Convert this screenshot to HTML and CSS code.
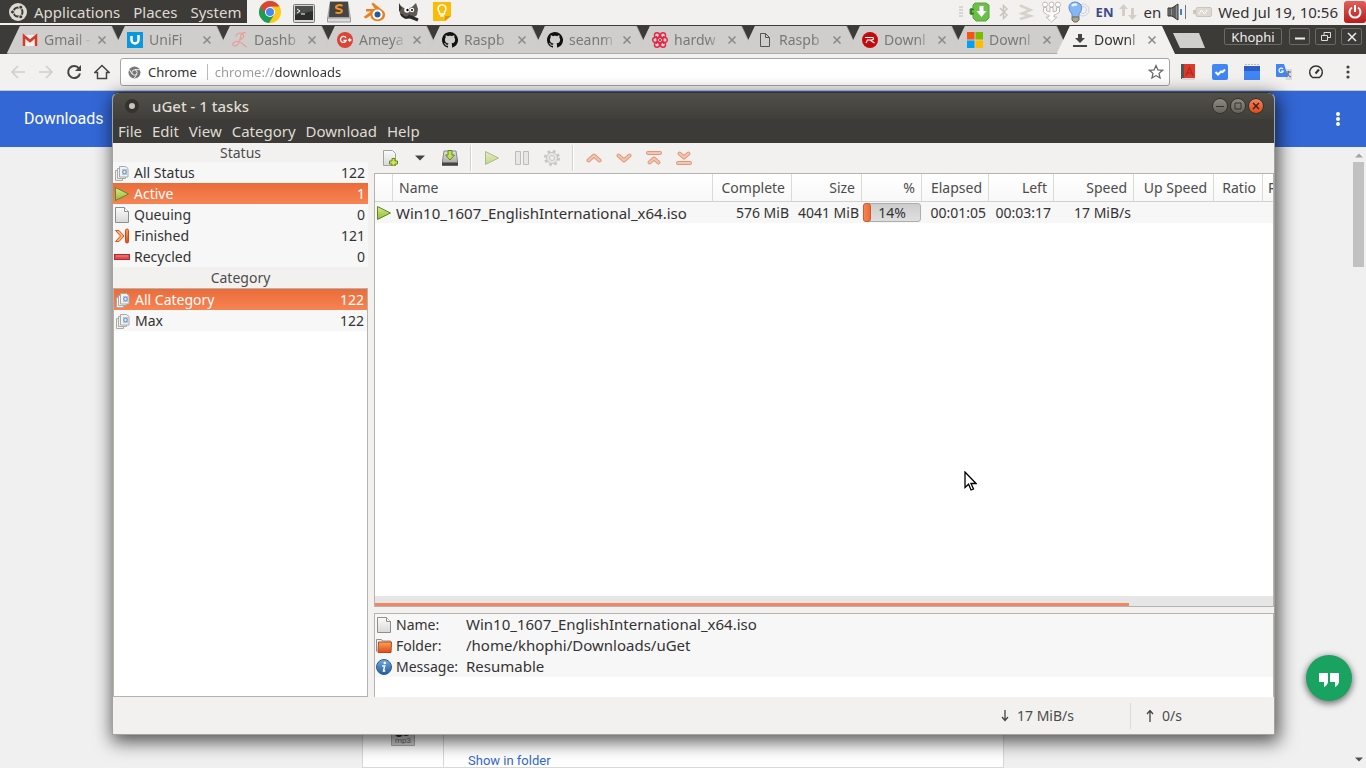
FILE: index.html
```html
<!DOCTYPE html>
<html lang="en">
<head>
    <meta charset="UTF-8">
    <meta name="viewport" content="width=device-width, initial-scale=1.0">
    <title>Downloads</title>
    <link rel="stylesheet" href="styles.css">
</head>
<body>

    <!-- shared icons -->
    <svg class="defs" width="0" height="0" aria-hidden="true">
        <defs>
            <linearGradient id="gGreen" x1="0" y1="0" x2="0" y2="1"><stop offset="0" stop-color="#dbe98c"/><stop offset="1" stop-color="#93b83a"/></linearGradient>
            <linearGradient id="gPaper" x1="0" y1="0" x2="0" y2="1"><stop offset="0" stop-color="#fbfbfb"/><stop offset="1" stop-color="#d8d8d8"/></linearGradient>
            <linearGradient id="gOrange" x1="0" y1="0" x2="0" y2="1"><stop offset="0" stop-color="#f9a35c"/><stop offset="1" stop-color="#df4a16"/></linearGradient>
            <linearGradient id="gBlue" x1="0" y1="0" x2="0" y2="1"><stop offset="0" stop-color="#79a9dc"/><stop offset="1" stop-color="#1f5c9c"/></linearGradient>
            <linearGradient id="gDisk" x1="0" y1="0" x2="0" y2="1"><stop offset="0" stop-color="#e4e4e4"/><stop offset="1" stop-color="#9b9b9b"/></linearGradient>
        </defs>
        <symbol id="play" viewBox="0 0 16 16"><path d="M1.500 1.500v13L14.500 8z" fill="url(#gGreen)" stroke="#5d8a1c"/></symbol>
        <symbol id="page" viewBox="0 0 16 16"><path d="M1.500.5h9l4 4v11h-13z" fill="url(#gPaper)" stroke="#8e8e8e"/><path d="M10.500.500v4h4" fill="#fff" stroke="#8e8e8e"/></symbol>
        <symbol id="pages" viewBox="0 0 16 16">
            <g fill="#f1f1f0" stroke="#a9a9a5"><path d="M1.500 5.500h7v10h-7z"/><path d="M3.500 3.500h8v10h-8z"/><path d="M5.500 1.500h6l2.500 2v8.500h-8.500z"/></g>
            <rect x="8" y="4" width="5" height="6" fill="#b4cbe6"/><circle cx="10.500" cy="7" r="1.800" fill="#dfe9f5" stroke="#6b90bd"/>
        </symbol>
        <symbol id="finished" viewBox="0 0 16 16"><path d="M1.500 2.500l5 5.500-5 5.500h3.500l5-5.500-5-5.500z" fill="#f9b27a" stroke="#d2571f"/><rect x="11.500" y="1" width="3" height="14" rx="1.500" fill="url(#gOrange)" stroke="#cc4b16"/></symbol>
        <symbol id="recycled" viewBox="0 0 16 16"><rect x=".5" y="5.500" width="15" height="5" fill="#e04a4e" stroke="#b32a2e"/><path d="M2 7h12" stroke="#f08a8c"/></symbol>
        <symbol id="folder" viewBox="0 0 16 16"><path d="M.5 13.500v-12h5l1 1.500h8v3" fill="#f4f4f4" stroke="#8d8d8d"/><path d="M2.500 4h13l-.5 10.500H2z" fill="url(#gOrange)" stroke="#b8481a"/></symbol>
        <symbol id="info" viewBox="0 0 16 16"><circle cx="8" cy="8" r="7.500" fill="url(#gBlue)" stroke="#2b5f94"/><circle cx="8.800" cy="4" r="1.300" fill="#fff"/><path d="M6.200 7h2.500l-1.200 5h1.800" fill="none" stroke="#fff" stroke-width="1.500"/></symbol>
        <symbol id="close" viewBox="0 0 8 8"><path d="M.5.5l7 7M7.500.5l-7 7" stroke="currentColor" stroke-width="1.500"/></symbol>
        <symbol id="github" viewBox="0 0 16 16"><path fill="#111" d="M8 0C3.580 0 0 3.580 0 8c0 3.540 2.290 6.530 5.470 7.590.4.070.55-.17.55-.38 0-.19-.01-.82-.01-1.490-2.010.37-2.530-.49-2.690-.94-.09-.23-.48-.94-.82-1.130-.28-.15-.68-.52-.01-.53.63-.01 1.080.58 1.230.82.72 1.210 1.870.87 2.330.66.070-.52.28-.87.51-1.070-1.780-.2-3.640-.89-3.640-3.950 0-.87.31-1.590.82-2.150-.08-.2-.36-1.020.08-2.120 0 0 .67-.21 2.200.82.640-.18 1.320-.27 2-.27s1.360.09 2 .27c1.530-1.040 2.200-.82 2.200-.82.44 1.100.16 1.920.08 2.120.51.560.82 1.270.82 2.150 0 3.070-1.870 3.750-3.650 3.950.29.25.54.73.54 1.480 0 1.070-.01 1.930-.01 2.200 0 .21.15.46.55.38A8 8 0 0 0 8 0z"/></symbol>
        <symbol id="chevron" viewBox="0 0 16 16"><path d="M2.500 10.500L8 5.500l5.500 5" fill="none" stroke="#dd8062" stroke-width="4" stroke-linecap="round" stroke-linejoin="round"/><path d="M2.500 10.500L8 5.500l5.500 5" fill="none" stroke="#f5bd9c" stroke-width="2" stroke-linecap="round"/></symbol>
        <symbol id="chevronBar" viewBox="0 0 16 16"><path d="M2 3h12M3.500 12.500L8 8.500l4.500 4" fill="none" stroke="#dd8062" stroke-width="4" stroke-linecap="round" stroke-linejoin="round"/><path d="M2 3h12M3.500 12.500L8 8.500l4.500 4" fill="none" stroke="#f5bd9c" stroke-width="2" stroke-linecap="round"/></symbol>
    </svg>

    <!-- desktop panel -->
    <header class="panel">
        <nav class="panel-menu">
            <svg width="18" height="18" viewBox="0 0 18 18"><circle cx="9" cy="9" r="9" fill="#dfdbd2"/><circle cx="9" cy="9" r="4.500" fill="none" stroke="#3c3b37" stroke-width="2"/><g fill="#3c3b37" stroke="#dfdbd2"><circle cx="3.500" cy="9" r="2"/><circle cx="11.800" cy="4.200" r="2"/><circle cx="11.800" cy="13.800" r="2"/></g></svg>
            <button>Applications</button>
            <button>Places</button>
            <button>System</button>
        </nav>
        <div class="launchers">
            <button aria-label="Chrome"><svg width="22" height="22" viewBox="0 0 22 22"><circle cx="11" cy="11" r="11" fill="#fbc916"/><path d="M1.500 5.500A11 11 0 0 0 10 22l5.300-8.500L11 11z" fill="#1b9c57"/><path d="M1.500 5.500A11 11 0 0 1 20.500 5.500H11L6.700 13.500z" fill="#dc4437"/><circle cx="11" cy="11" r="5" fill="#fff"/><circle cx="11" cy="11" r="4" fill="#4688f1"/></svg></button>
            <button aria-label="Terminal"><svg width="22" height="22" viewBox="0 0 22 22"><rect x=".5" y="3.500" width="21" height="18" rx="1" fill="#d8d8d4" stroke="#777"/><rect x="2" y="5" width="18" height="14" fill="#2b2d2b"/><path d="M2 5h18v5L2 14z" fill="#4b4e4b"/><path d="M4 8l3 2-3 2M8 13h4" fill="none" stroke="#fff"/></svg></button>
            <button aria-label="Sublime Text"><svg width="24" height="22" viewBox="0 0 24 22"><path d="M3 0h18l3 17v4H0v-4z" fill="#a9a9a9"/><path d="M3 1h18l1 15H2z" fill="#454545"/><path d="M.5 17h23v4H.5z" fill="#dcdcdc" stroke="#9a9a9a"/><path d="M15.500 4.800C13 3.500 9 4 9 6.200s6 1.300 6 3.600-4 2.700-6.500 1.500" fill="none" stroke="#f8931f" stroke-width="2"/></svg></button>
            <button aria-label="Blender"><svg width="23" height="20" viewBox="0 0 23 20"><path d="M10 .5l10.500 8.500c3 3 1.500 8-2.500 9.500-5 2-10.500-1-10.500-5L3 16.500.5 15l7.500-5.500H3V7h9L8.500 2z" fill="#e88020"/><circle cx="14.500" cy="12.500" r="5" fill="#fff"/><circle cx="14.500" cy="12.500" r="3" fill="#225a9c"/></svg></button>
            <button aria-label="GIMP"><svg width="22" height="20" viewBox="0 0 22 20"><path d="M1 3l5 3c3 1 6 0 8-1l4-4 2 6-1 6-4 3-8 1-5-5z" fill="#5f5b52"/><circle cx="9" cy="8" r="2.800" fill="#fff"/><circle cx="14" cy="8" r="2.200" fill="#fff"/><circle cx="9.500" cy="8" r="1.200"/><circle cx="14" cy="8" r="1"/><path d="M1 1l3 5-3 4z" fill="#333"/><path d="M10 14l10 4" stroke="#2e2c28" stroke-width="3"/><path d="M3 12c2 4 6 4 8 3" stroke="#272622" stroke-width="2" fill="none"/></svg></button>
            <button aria-label="Keep"><svg width="20" height="20" viewBox="0 0 20 20"><path d="M1 0h18v14l-6 5H1z" fill="#fbbc05"/><path d="M19 14h-6v5z" fill="#e09a00"/><path d="M7.500 12v-2.200a4 4 0 1 1 5 0V12zM8 14h4" fill="none" stroke="#fff" stroke-width="1.500"/></svg></button>
        </div>
        <div class="tray">
            <svg width="4" height="12" viewBox="0 0 4 12"><path d="M0 1h4M0 4h4M0 7h4M0 10h4" stroke="#bbb"/></svg>
            <svg width="21" height="20" viewBox="0 0 21 20"><path d="M6 1h11l3 2v13l-3 3H7l-3-3v-3L1 12V7l3-1V3z" fill="#6cbf4a" stroke="#57a639"/><path d="M5 7.500H2v4h3" fill="none" stroke="#2f7a1b" stroke-width="1.500"/><path d="M10.500 4h4v5h3L12.500 15l-5-6h3z" fill="#fff"/></svg>
            <svg width="15" height="18" viewBox="0 0 15 18"><path d="M4 5l7 7-3.500 3.500v-13L11 6l-7 7" fill="none" stroke="#c9c5be" stroke-width="1.500"/></svg>
            <svg width="18" height="18" viewBox="0 0 18 18"><path d="M3 2.500l10.500 4.500L5 10.500l8.500 2.500L3 16" fill="none" stroke="#d6d2ca" stroke-width="2.500"/></svg>
            <svg width="21" height="22" viewBox="0 0 21 22"><g fill="#fff" stroke="#c0bbb2"><circle cx="4" cy="3.500" r="2.500"/><circle cx="10.500" cy="3.500" r="2.500"/><circle cx="17" cy="3.500" r="2.500"/><path d="M2.500 6.500h3V10l3.500 1V6.500h3V11l3.500-1V6.500h3V11l-4.500 3H13v2h3l-5.500 5L5 16h3v-2H6.500l-4-3z"/></g></svg>
            <svg width="22" height="22" viewBox="0 0 22 22"><circle cx="15" cy="9" r="6" fill="none" stroke="#cbd1da"/><circle cx="15" cy="9" r="3.500" fill="none" stroke="#cbd1da"/><path d="M4 13C-2 6 2 1 7 1s10 5 4 12v3H4z" fill="#86b6f5" stroke="#5e8fd5"/><path d="M4 5q2-2.500 5-1" stroke="#e9f4ff" stroke-width="2.500" fill="none"/><path d="M4 16h7v3l-2 2H6l-2-2z" fill="#aaa58d" stroke="#716d5a"/></svg>
            <span class="tray-lang">EN</span>
            <svg width="18" height="18" viewBox="0 0 18 18"><path d="M0 6l4.500-5L9 6H6v7H3V6zM9 12h3V5h3v7h3l-4.500 5z" fill="#d3cfc5"/></svg>
            <span>en</span>
            <svg width="20" height="18" viewBox="0 0 20 18"><path d="M1 5h4l6-4v16l-6-4H1z" fill="#8e8e8e" stroke="#333"/><path d="M3 5v8M6 4v10M8 3v12" stroke="#333"/><path d="M14 6v6" stroke="#3c86c6" stroke-width="2"/><path d="M18.500 2v14" stroke="#777"/></svg>
            <svg width="19" height="12" viewBox="0 0 19 12"><rect x="3" y="1.500" width="15.500" height="9" rx="1.500" fill="#dedad2" stroke="#cac6bd"/><path d="M0 4h3v4H0z" fill="#cac6bd"/><path d="M6 8l2.500-4 3 4L14 4" stroke="#fff" fill="none"/></svg>
            <time>Wed Jul 19, 10:56</time>
            <button class="power" aria-label="Shut down"><svg width="14" height="14" viewBox="0 0 14 14"><path d="M4 2.500a5.500 5.500 0 1 0 6 0M7 0v7" fill="none" stroke="#fff" stroke-width="2"/></svg></button>
        </div>
    </header>

    <!-- browser -->
    <div class="tabstrip">
        <div class="tabs">
            <div class="tab"><svg width="16" height="16" viewBox="0 0 16 16"><path d="M1 3h14v11H1z" fill="#f4f0ee"/><path d="M2 14V4l6 5 6-5v10" fill="none" stroke="#d8392b" stroke-width="2.500"/></svg><a href="#">Gmail -</a><button aria-label="Close tab"><svg><use href="#close"/></svg></button></div>
            <div class="tab"><svg width="16" height="16" viewBox="0 0 16 16"><path d="M0 0h16v16H0z" fill="#0b97dc"/><path d="M4.500 4v4a3.500 3.500 0 0 0 7 0V3" fill="none" stroke="#fff" stroke-width="2.500"/></svg><a href="#">UniFi</a><button aria-label="Close tab"><svg><use href="#close"/></svg></button></div>
            <div class="tab"><svg width="16" height="16" viewBox="0 0 16 16"><path d="M14 1C9-1 9 4 8 8s-4 7-6.500 5.500S3 9 6.500 9.500 12 14 15 15M4 4.500c0-4 5-4 7-2s-1 5-4 5" fill="none" stroke="#e8a09b" stroke-width="1.200"/></svg><a href="#">Dashb</a><button aria-label="Close tab"><svg><use href="#close"/></svg></button></div>
            <div class="tab"><svg width="16" height="16" viewBox="0 0 16 16"><circle cx="8" cy="8" r="8" fill="#db4437"/><path d="M9 5.800a3 3 0 1 0 .3 2.700H6.500M11 8h3.500M12.700 6.200v3.600" fill="none" stroke="#fff" stroke-width="1.300"/></svg><a href="#">Ameya</a><button aria-label="Close tab"><svg><use href="#close"/></svg></button></div>
            <div class="tab"><svg width="16" height="16"><use href="#github"/></svg><a href="#">Raspb</a><button aria-label="Close tab"><svg><use href="#close"/></svg></button></div>
            <div class="tab"><svg width="16" height="16"><use href="#github"/></svg><a href="#">seanm</a><button aria-label="Close tab"><svg><use href="#close"/></svg></button></div>
            <div class="tab"><svg width="16" height="16" viewBox="0 0 16 16"><g fill="#f6cfd5" stroke="#da2c48" stroke-width="1.500"><circle cx="5" cy="3.300" r="2.500"/><circle cx="11" cy="3.300" r="2.500"/><circle cx="3.200" cy="8" r="2.500"/><circle cx="12.800" cy="8" r="2.500"/><circle cx="5" cy="12.700" r="2.500"/><circle cx="11" cy="12.700" r="2.500"/><circle cx="8" cy="8" r="2.800"/></g><path d="M4 4l8 8M12 4l-8 8" stroke="#da2c48"/></svg><a href="#">hardw</a><button aria-label="Close tab"><svg><use href="#close"/></svg></button></div>
            <div class="tab"><svg width="16" height="16" viewBox="0 0 16 16"><path d="M3.500 1.500h5l4 4v9h-9zM8.500 1.500v4h4" fill="none" stroke="#555"/></svg><a href="#">Raspb</a><button aria-label="Close tab"><svg><use href="#close"/></svg></button></div>
            <div class="tab"><svg width="16" height="16" viewBox="0 0 16 16"><circle cx="8" cy="8" r="8" fill="#c40a0a"/><path d="M3 5.500h8q1.500 2-1.500 2.500H5.500L4 11M8 8l4.500 3" fill="none" stroke="#fff" stroke-width="1.200"/></svg><a href="#">Downl</a><button aria-label="Close tab"><svg><use href="#close"/></svg></button></div>
            <div class="tab"><svg width="16" height="16" viewBox="0 0 16 16"><path d="M0 0h7.500v7.500H0z" fill="#f65314"/><path d="M8.500 0H16v7.500H8.500z" fill="#7cbb00"/><path d="M0 8.500h7.500V16H0z" fill="#00a1f1"/><path d="M8.500 8.500H16V16H8.500z" fill="#ffbb00"/></svg><a href="#">Downl</a><button aria-label="Close tab"><svg><use href="#close"/></svg></button></div>
            <div class="tab active"><svg width="16" height="16" viewBox="0 0 16 16"><path d="M6 2h4v4h3l-5 5-5-5h3zM1 13h14v2H1z" fill="#444"/></svg><a href="#">Downl</a><button aria-label="Close tab"><svg><use href="#close"/></svg></button></div>
        </div>
        <button class="new-tab" aria-label="New tab"></button>
        <div class="browser-controls">
            <button class="profile">Khophi</button>
            <button aria-label="Minimize"><svg width="12" height="12" viewBox="0 0 12 12"><path d="M1 7.500h10" stroke="#eee" stroke-width="2"/></svg></button>
            <button aria-label="Restore"><svg width="12" height="12" viewBox="0 0 12 12"><path d="M4 4V1.500h6.500v5H8M1.500 4.500h6v5h-6z" fill="none" stroke="#ddd"/></svg></button>
            <button aria-label="Close"><svg width="12" height="12" viewBox="0 0 12 12"><path d="M2 2l8 8M10 2l-8 8" stroke="#eee" stroke-width="1.500"/></svg></button>
        </div>
    </div>

    <div class="toolbar">
        <div class="nav-buttons">
            <button aria-label="Back"><svg width="16" height="16" viewBox="0 0 16 16"><path d="M15 8H2M8 2L2 8l6 6" fill="none" stroke="#cfcecc" stroke-width="1.600"/></svg></button>
            <button aria-label="Forward"><svg width="16" height="16" viewBox="0 0 16 16"><path d="M1 8h13M8 2l6 6-6 6" fill="none" stroke="#cfcecc" stroke-width="1.600"/></svg></button>
            <button aria-label="Reload"><svg width="16" height="16" viewBox="0 0 16 16"><path d="M13 4.500A6 6 0 1 0 14 9.500" fill="none" stroke="#444" stroke-width="2"/><path d="M15 1v6H9z" fill="#444"/></svg></button>
            <button aria-label="Home"><svg width="16" height="16" viewBox="0 0 16 16"><path d="M.8 8.500L8 1.500l7.200 7H12.500v6h-9v-6z" fill="none" stroke="#444" stroke-width="1.500"/></svg></button>
        </div>
        <div class="omnibox">
            <svg width="13" height="13" viewBox="0 0 13 13"><circle cx="6.500" cy="6.500" r="6" fill="#777"/><circle cx="6.500" cy="6.500" r="2.600" fill="#777" stroke="#eee"/><path d="M6.500 3.700H12M4 8L1.300 3.500M9 8l-3 4.500" stroke="#eee"/></svg>
            <label for="address">Chrome</label>
            <input id="address" type="text" value="chrome://downloads">
            <button aria-label="Bookmark"><svg width="16" height="16" viewBox="0 0 16 16"><path d="M8 1.500l1.900 4.400 4.700.4-3.600 3.100 1.100 4.600L8 11.600 3.900 14 5 9.400 1.400 6.300l4.700-.4z" fill="none" stroke="#666" stroke-width="1.200"/></svg></button>
        </div>
        <div class="extensions">
            <button aria-label="Dictionary"><svg width="16" height="16" viewBox="0 0 16 16"><path d="M1 0h14v14H1z" fill="#dc3b2c"/><path d="M1 0h3v15H1z" fill="#555"/><path d="M2 14h13v2H2z" fill="#ddd"/><path d="M6 11.500l3.500-8 3.500 8M7.500 9h4" fill="none" stroke="#b0281d" stroke-width="1.200"/></svg></button>
            <button aria-label="Tasks"><svg width="16" height="16" viewBox="0 0 16 16"><rect width="16" height="16" rx="2" fill="#4285f4"/><path d="M3.500 8l2.500 2.500 3-3L10.500 8l2.500-2.500" fill="none" stroke="#fff" stroke-width="2"/></svg></button>
            <button aria-label="Inbox"><svg width="16" height="16" viewBox="0 0 16 16"><path d="M1 .5h14" stroke="#bbb" stroke-dasharray="2 1"/><path d="M0 2h16v14H0z" fill="#4285f4"/><path d="M0 2h16v5H0z" fill="#2c5fc4"/></svg></button>
            <button aria-label="Translate"><svg width="16" height="16" viewBox="0 0 16 16"><path d="M7 5h9v11H10z" fill="#d5d8dc"/><path d="M0 0h8l4 13H1q-1 0-1-1z" fill="#4285f4"/><path d="M7 5a2.200 2.200 0 1 0 .3 2H5" fill="none" stroke="#fff" stroke-width="1.200"/><path d="M10 8h5M12.500 7v1q0 3-2 4M11 9q2 4 4 4" fill="none" stroke="#667"/></svg></button>
            <button aria-label="Speed"><svg width="16" height="16" viewBox="0 0 16 16"><path d="M4.500 13.500a6.300 6.300 0 1 1 7 0z" fill="none" stroke="#333" stroke-width="1.500"/><path d="M7.500 9.500l3.500-4" stroke="#333" stroke-width="2"/></svg></button>
            <button aria-label="Menu"><svg width="16" height="16" viewBox="0 0 16 16"><g fill="#444"><circle cx="8" cy="3" r="1.600"/><circle cx="8" cy="8" r="1.600"/><circle cx="8" cy="13" r="1.600"/></g></svg></button>
        </div>
    </div>

    <header class="page-header">
        <h1>Downloads</h1>
        <button aria-label="More actions"><svg width="16" height="16" viewBox="0 0 16 16"><g fill="#fff"><circle cx="8" cy="3" r="2"/><circle cx="8" cy="8" r="2"/><circle cx="8" cy="13" r="2"/></g></svg></button>
    </header>

    <main class="page">
        <div class="page-content">
            <div class="download-card">
                <div class="file-icon"><svg width="24" height="24" viewBox="0 0 24 24"><path d="M.5 0v23.500h23V0" fill="#d2d2d2" stroke="#aaa"/><g fill="#333"><circle cx="8" cy="11" r="4"/><circle cx="15" cy="10" r="4"/></g></svg><span>mp3</span></div>
                <div class="file-info"><a href="#">Show in folder</a></div>
            </div>
        </div>
        <div class="scrollbar">
            <svg width="8" height="5" viewBox="0 0 8 5"><path d="M0 4.500L4 .5l4 4z" fill="#a3a3a3"/></svg>
            <div class="thumb"></div>
            <svg width="8" height="5" viewBox="0 0 8 5"><path d="M0 .5l4 4 4-4z" fill="#505050"/></svg>
        </div>
    </main>

    <button class="hangouts" aria-label="Hangouts"><svg width="20" height="14" viewBox="0 0 20 14"><path d="M0 0h9v8q0 4-4 6V9H0zM11 0h9v8q0 4-4 6V9h-5z" fill="#fff"/></svg></button>

    <!-- uGet window -->
    <section class="window">
        <div class="titlebar">
            <button class="title-dot" aria-label="Window menu"></button>
            <h2>uGet - 1 tasks</h2>
            <button class="title-button" aria-label="Minimize"><svg width="8" height="8" viewBox="0 0 8 8"><path d="M0 4.500h8" stroke="#33322e"/></svg></button>
            <button class="title-button" aria-label="Maximize"><svg width="8" height="8" viewBox="0 0 8 8"><path d="M1 1h6v6H1z" fill="none" stroke="#33322e"/></svg></button>
            <button class="title-button title-close" aria-label="Close"><svg width="8" height="8" viewBox="0 0 8 8"><path d="M1 1l6 6M7 1L1 7" stroke="#4a1d10" stroke-width="1.500"/></svg></button>
        </div>
        <nav class="menubar">
            <button>File</button>
            <button>Edit</button>
            <button>View</button>
            <button>Category</button>
            <button>Download</button>
            <button>Help</button>
        </nav>

        <div class="panes">
            <aside class="sidebar">
                <h3>Status</h3>
                <ul class="list">
                    <li><svg><use href="#pages"/></svg>All Status<span>122</span></li>
                    <li class="selected"><svg><use href="#play"/></svg>Active<span>1</span></li>
                    <li><svg><use href="#page"/></svg>Queuing<span>0</span></li>
                    <li><svg><use href="#finished"/></svg>Finished<span>121</span></li>
                    <li><svg><use href="#recycled"/></svg>Recycled<span>0</span></li>
                </ul>
                <h3 class="category-title">Category</h3>
                <ul class="list framed">
                    <li class="selected"><svg><use href="#pages"/></svg>All Category<span>122</span></li>
                    <li><svg><use href="#pages"/></svg>Max<span>122</span></li>
                </ul>
            </aside>

            <div class="content">
                <div class="tools">
                    <button aria-label="New download"><svg width="16" height="16" viewBox="0 0 16 16"><path d="M1.500.5h9l3 3v12h-12z" fill="url(#gPaper)" stroke="#a2a2a2"/><path d="M10 8.500h3v2.500h2.500v3H13v2h-3v-2H7.500v-3H10z" fill="#cfe35a" stroke="#5d8a1c"/></svg></button>
                    <button aria-label="More new downloads"><svg width="10" height="6" viewBox="0 0 10 6"><path d="M0 .5h10l-5 5z" fill="#444"/></svg></button>
                    <button aria-label="Save"><svg width="16" height="16" viewBox="0 0 16 16"><path d="M2 1h12l1.500 10v4.500H.5V11z" fill="url(#gDisk)" stroke="#888"/><path d="M0 12.500h16v3H0z" fill="#444"/><path d="M6 .5h4V5h2.500L8 10 3.500 5H6z" fill="#c3dc5c" stroke="#5d8a1c"/></svg></button>
                    <i></i>
                    <button disabled aria-label="Start"><svg width="16" height="16"><use href="#play"/></svg></button>
                    <button disabled aria-label="Pause"><svg width="16" height="16" viewBox="0 0 16 16"><path d="M1.500 1.500h5v13h-5zM9.500 1.500h5v13h-5z" fill="#ddd" stroke="#888"/></svg></button>
                    <button disabled aria-label="Properties"><svg width="16" height="16" viewBox="0 0 16 16"><circle cx="8" cy="8" r="6.500" fill="none" stroke="#999" stroke-width="3" stroke-dasharray="2.600 2.500"/><circle cx="8" cy="8" r="5.500" fill="#ddd" stroke="#999"/><circle cx="8" cy="8" r="2.500" fill="#eee" stroke="#999"/></svg></button>
                    <i></i>
                    <button aria-label="Move up"><svg width="16" height="16"><use href="#chevron"/></svg></button>
                    <button aria-label="Move down"><svg class="flip" width="16" height="16"><use href="#chevron"/></svg></button>
                    <button aria-label="Move to top"><svg width="16" height="16"><use href="#chevronBar"/></svg></button>
                    <button aria-label="Move to bottom"><svg class="flip" width="16" height="16"><use href="#chevronBar"/></svg></button>
                </div>

                <div class="downloads">
                    <table>
                        <colgroup><col class="c-icon"><col><col class="c-complete"><col class="c-size"><col class="c-percent"><col class="c-elapsed"><col class="c-left"><col class="c-speed"><col class="c-speed"><col class="c-ratio"><col class="c-last"></colgroup>
                        <thead>
                            <tr><th></th><th class="name">Name</th><th>Complete</th><th>Size</th><th>%</th><th>Elapsed</th><th>Left</th><th>Speed</th><th>Up Speed</th><th>Ratio</th><th class="cut">R</th></tr>
                        </thead>
                        <tbody>
                            <tr>
                                <td><svg width="16" height="16"><use href="#play"/></svg></td>
                                <td class="name">Win10_1607_EnglishInternational_x64.iso</td>
                                <td>576 MiB</td>
                                <td>4041 MiB</td>
                                <td class="progress-cell"><div class="progress"><div class="fill" style="width: 14%"></div><span>14%</span></div></td>
                                <td>00:01:05</td>
                                <td>00:03:17</td>
                                <td>17 MiB/s</td>
                                <td></td>
                                <td></td>
                                <td></td>
                            </tr>
                        </tbody>
                    </table>
                    <div class="hscroll"><div></div></div>
                </div>

                <div class="details">
                    <dl>
                        <dt><svg><use href="#page"/></svg>Name:</dt><dd>Win10_1607_EnglishInternational_x64.iso</dd>
                        <dt><svg><use href="#folder"/></svg>Folder:</dt><dd>/home/khophi/Downloads/uGet</dd>
                        <dt><svg><use href="#info"/></svg>Message:</dt><dd>Resumable</dd>
                    </dl>
                </div>
            </div>
        </div>

        <footer class="statusbar">
            <div><svg width="8" height="12" viewBox="0 0 8 12"><path d="M4 0v10M1 7l3 3.500L7 7" fill="none" stroke="#444" stroke-width="1.300"/></svg>17 MiB/s</div>
            <div><svg width="8" height="12" viewBox="0 0 8 12"><path d="M4 12V1M1 4l3-3.500L7 4" fill="none" stroke="#444" stroke-width="1.300"/></svg>0/s</div>
        </footer>
    </section>

    <svg class="cursor" width="13" height="20" viewBox="0 0 13 20"><path d="M1 1v15.500l3.600-3.300L7 19l2.500-1-2.500-5.500h5z" fill="#fff" stroke="#000" stroke-width="1.300"/></svg>

</body>
</html>
```
FILE: styles.css
```css
* {
    box-sizing: border-box;
}

body {
    margin: 0;
    height: 100vh;
    display: flex;
    flex-direction: column;
    overflow: hidden;
    position: relative;
    background: #f0f0f0;
    color: #333;
    font-family: "Noto Sans", "Open Sans", sans-serif;
    font-size: 14px;
    line-height: 20px;
}

h1, h2, h3, ul, dl, dd {
    margin: 0;
    padding: 0;
    font-weight: normal;
    font-size: inherit;
}

ul {
    list-style: none;
}

svg {
    display: block;
    flex: none;
}

.defs {
    position: absolute;
}

button {
    display: flex;
    align-items: center;
    justify-content: center;
    padding: 0;
    border: none;
    background: none;
    color: inherit;
    font: inherit;
}

a {
    color: inherit;
    text-decoration: none;
}

/* desktop panel */
.panel {
    height: 26px;
    flex: none;
    display: flex;
    align-items: center;
    padding-bottom: 2px;
    background: #f2f1ef;
    border-bottom: 1px solid #3c3b37;
    font-size: 15px;
}

.panel-menu {
    display: flex;
    align-items: center;
    align-self: stretch;
    gap: 13px;
    padding: 0 6px 0 9px;
    background: #3c3b37;
    color: #dfdbd2;
}

.panel-menu svg {
    margin-right: -6px;
}

.launchers {
    display: flex;
    align-items: center;
    gap: 12px;
    padding-left: 12px;
}

.tray {
    display: flex;
    align-items: center;
    gap: 6px;
    margin-left: auto;
    white-space: nowrap;
}

.tray-lang {
    color: #3b4a8c;
    font-weight: bold;
    font-size: 13px;
}

.power {
    width: 22px;
    height: 22px;
    border-radius: 3px;
    background: linear-gradient(#e2605c, #b81c1c);
}

/* browser tabs */
.tabstrip {
    height: 28px;
    flex: none;
    display: flex;
    padding: 0 4px 0 7px;
    background: #3c3b37;
}

.tabs {
    display: flex;
    flex: 0 1 1168px;
    min-width: 0;
}

.tab {
    position: relative;
    isolation: isolate;
    flex: 1 1 0;
    min-width: 0;
    margin-right: -13px;
    padding: 0 19px 0 15px;
    display: flex;
    align-items: center;
    gap: 6px;
    color: #7a7876;
}

.tab:last-child {
    margin-right: 0;
}

.tab::before,
.tab::after {
    content: "";
    position: absolute;
    inset: 0;
    z-index: -2;
    background: #aeaca9;
    clip-path: polygon(13px 0, calc(100% - 13px) 0, 100% 100%, 0 100%);
}

.tab::after {
    right: 1px;
    bottom: 1px;
    z-index: -1;
    background: #d0cecc;
}

.tab.active {
    color: #333;
    z-index: 1;
}

.tab.active::before,
.tab.active::after {
    background: #f2f1ef;
}

.tab a {
    flex: 1;
    min-width: 0;
    overflow: hidden;
    white-space: nowrap;
    mask-image: linear-gradient(to right, #000 70%, transparent);
}

.tab button svg {
    width: 8px;
    height: 8px;
    color: #8b8987;
}

.new-tab {
    width: 32px;
    height: 15px;
    margin: 7px 0 0 -2px;
    background: #d0cecc;
    clip-path: polygon(0 0, 26px 0, 100% 100%, 7px 100%);
}

.browser-controls {
    display: flex;
    gap: 5px;
    margin-left: auto;
    color: #eee;
    font-size: 13px;
}

.browser-controls button {
    width: 21px;
    height: 17px;
    margin-top: 2px;
    border: 1px solid #6b6964;
    border-radius: 2px;
}

.browser-controls .profile {
    width: 58px;
    margin-right: 2px;
}

/* browser toolbar */
.toolbar {
    height: 37px;
    flex: none;
    display: flex;
    align-items: center;
    padding: 0 10px;
    background: #f2f1ef;
    border-bottom: 1px solid #c8c6c4;
}

.nav-buttons {
    display: flex;
    gap: 12px;
    margin-right: 10px;
}

.omnibox {
    flex: 1;
    height: 28px;
    display: flex;
    align-items: center;
    gap: 7px;
    padding: 0 5px 0 7px;
    background: #fff;
    border: 1px solid #a5a5a5;
    border-radius: 3px;
    font-size: 13px;
}

.omnibox label {
    padding-right: 10px;
    border-right: 1px solid #bbb;
    line-height: 16px;
}

.omnibox input {
    flex: 1;
    min-width: 0;
    padding: 0;
    border: none;
    outline: none;
    font: inherit;
    color: transparent;
    background: linear-gradient(to right, #999 60px, #333 60px);
    background-clip: text;
    -webkit-background-clip: text;
}

.extensions {
    display: flex;
    gap: 16px;
    margin-left: 10px;
}

/* downloads page */
.page-header {
    height: 56px;
    flex: none;
    display: flex;
    align-items: center;
    justify-content: space-between;
    padding: 0 20px 0 24px;
    background: #3367d6;
    color: #fff;
    font-family: Roboto, sans-serif;
    font-size: 16px;
}

.page {
    flex: 1;
    display: flex;
    min-height: 0;
}

.page-content {
    flex: 1;
    display: flex;
    justify-content: center;
    padding-left: 15px;
}

.download-card {
    width: 642px;
    display: flex;
    background: #fff;
    border: 1px solid #d8d8d8;
    font-family: Roboto, sans-serif;
}

.file-icon {
    width: 81px;
    display: flex;
    flex-direction: column;
    align-items: center;
    justify-content: flex-end;
    padding-bottom: 21px;
    border-right: 1px solid #d8d8d8;
}

.file-icon span {
    margin-top: -10px;
    font-size: 8px;
    line-height: 10px;
    color: #666;
}

.file-info {
    display: flex;
    align-items: flex-end;
    padding-left: 24px;
    font-size: 13px;
    line-height: 12px;
    color: #3367d6;
}

.scrollbar {
    width: 15px;
    display: flex;
    flex-direction: column;
    align-items: center;
    gap: 4px;
    padding: 6px 0;
}

.scrollbar .thumb {
    width: 11px;
    height: 105px;
    margin-bottom: auto;
    background: #c1c1c1;
}

.hangouts {
    position: absolute;
    right: 14px;
    bottom: 67px;
    width: 46px;
    height: 46px;
    padding-top: 4px;
    border-radius: 50%;
    background: #1aa260;
    box-shadow: 0 2px 6px 1px rgba(0, 0, 0, 0.5);
}

/* uGet window */
.window {
    position: absolute;
    top: 92px;
    right: 91px;
    bottom: 33px;
    left: 112px;
    display: flex;
    flex-direction: column;
    background: #f2f1ef;
    border: 1px solid #a5a19b;
    border-top-color: #33322e;
    border-radius: 7px 7px 0 0;
    box-shadow: 2px 5px 18px 2px rgba(0, 0, 0, 0.65);
}

.titlebar {
    height: 26px;
    flex: none;
    display: flex;
    align-items: center;
    gap: 2px;
    padding: 0 10px 0 12px;
    border-radius: 6px 6px 0 0;
    background: linear-gradient(#504f49, #403f3a);
    color: #dfdbd2;
    font-size: 15px;
}

.titlebar h2 {
    flex: 1;
    padding-left: 11px;
    line-height: 18px;
    font-weight: 500;
}

.title-dot {
    width: 14px;
    height: 14px;
    border: 4px solid #33322e;
    border-radius: 50%;
    background: #c8c4bc;
}

.title-button {
    width: 16px;
    height: 16px;
    border: 1px solid #34332f;
    border-radius: 50%;
    background: linear-gradient(#8c8a82, #65635c);
}

.title-close {
    background: linear-gradient(#f4835f, #df4b1c);
}

.menubar {
    height: 24px;
    flex: none;
    display: flex;
    gap: 10px;
    padding: 0 5px;
    background: #3c3b37;
    color: #dfdbd2;
    font-size: 15px;
}

.panes {
    flex: 1;
    min-height: 0;
    display: flex;
    gap: 6px;
}

.sidebar {
    width: 255px;
    flex: none;
    display: flex;
    flex-direction: column;
}

.sidebar h3 {
    line-height: 19px;
    text-align: center;
    color: #4c4c4c;
}

.sidebar .category-title {
    line-height: 21px;
}

.list li {
    height: 21px;
    display: flex;
    align-items: center;
    gap: 4px;
    padding: 0 3px 0 1px;
    background: #f7f7f7;
}

.list svg,
.details svg {
    width: 16px;
    height: 16px;
}

.list span {
    margin-left: auto;
}

.list .selected {
    background: linear-gradient(#ea6c3a, #f78353);
    color: #fff;
}

.framed {
    flex: 1;
    background: #fff;
    border: 1px solid #b6b3ae;
}

.content {
    flex: 1;
    min-width: 0;
    display: flex;
    flex-direction: column;
}

.tools {
    height: 30px;
    flex: none;
    display: flex;
    align-items: center;
    gap: 2px;
    padding-left: 2px;
}

.tools button {
    width: 28px;
    height: 28px;
}

.tools button:disabled {
    opacity: 0.5;
}

.tools i {
    width: 2px;
    height: 26px;
    margin: 0 4px;
    border-left: 1px solid #d5d3d0;
    background: #fff;
}

.flip {
    transform: scaleY(-1);
}

.tools svg:has(use[href^="#chevron"]) {
    opacity: 0.8;
}

.downloads {
    flex: 1;
    min-height: 0;
    display: flex;
    flex-direction: column;
    justify-content: space-between;
    background: #fff;
    border: 1px solid #b6b3ae;
    overflow: hidden;
}

table {
    width: 100%;
    table-layout: fixed;
    border-collapse: separate;
    border-spacing: 0;
    white-space: nowrap;
}

.c-icon { width: 18px; }
.c-complete { width: 79px; }
.c-size { width: 70px; }
.c-percent { width: 60px; }
.c-elapsed { width: 67px; }
.c-left { width: 65px; }
.c-speed { width: 80px; }
.c-ratio { width: 49px; }
.c-last { width: 10px; }

th {
    height: 28px;
    padding: 0 6px;
    border-right: 1px solid #dcdad7;
    border-bottom: 1px solid #d3d1ce;
    background: linear-gradient(#fff, #f8f8f8);
    color: #4c4c4c;
    font-weight: normal;
    text-align: right;
}

th:last-child {
    border-right: none;
}

th.cut {
    padding: 0 0 0 5px;
    overflow: hidden;
    text-align: left;
}

td {
    height: 21px;
    padding: 0 3px;
    background: #f7f7f7;
    text-align: right;
}

td:first-child {
    padding: 0 1px;
}

th.name,
td.name {
    text-align: left;
}

td.name {
    padding-left: 3px;
    font-size: 15px;
}

td.progress-cell {
    padding: 0 1px;
}

.progress {
    position: relative;
    height: 19px;
    border: 1px solid #adadad;
    border-radius: 3px;
    background: linear-gradient(#cdcdcd, #dfdfdf);
    text-align: center;
    line-height: 18px;
}

.progress .fill {
    position: absolute;
    inset: -1px auto -1px -1px;
    border: 1px solid #d45a2b;
    border-radius: 3px;
    background: linear-gradient(to right, #f78353, #ea6c3a);
}

.hscroll {
    height: 10px;
    padding-top: 7px;
    background: #e6e6e6;
}

.hscroll div {
    width: 84%;
    height: 3px;
    background: #f08763;
}

.details {
    height: 84px;
    flex: none;
    margin-top: 6px;
    background: #fff;
    border: 1px solid #b6b3ae;
    border-bottom: none;
}

.details dl {
    display: grid;
    grid-template-columns: 90px 1fr;
    grid-auto-rows: 21px;
    padding-left: 1px;
    background: #f7f7f7;
    line-height: 21px;
}

.details dt {
    display: flex;
    align-items: center;
    gap: 4px;
}

.details dd {
    font-size: 15px;
}

.statusbar {
    height: 37px;
    flex: none;
    display: flex;
    align-items: center;
    justify-content: flex-end;
    color: #4c4c4c;
}

.statusbar div {
    width: 144px;
    height: 26px;
    display: flex;
    align-items: center;
    gap: 8px;
    padding-left: 15px;
}

.statusbar div + div {
    border-left: 1px solid #dcdad7;
}

/* mouse pointer */
.cursor {
    position: absolute;
    top: 471px;
    left: 964px;
}
```
